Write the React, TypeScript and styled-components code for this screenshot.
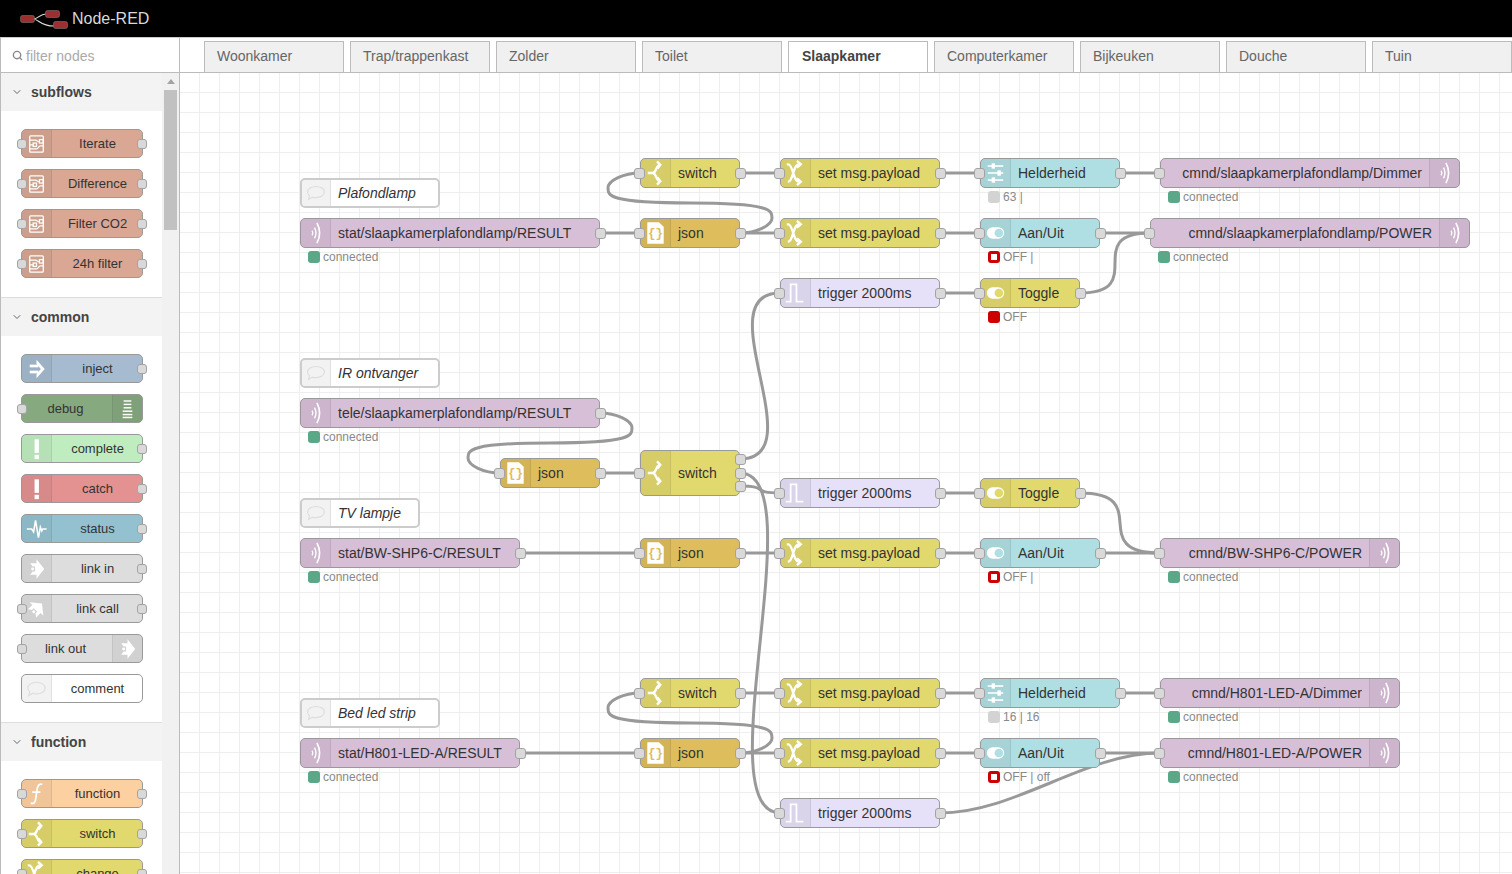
import React from 'react'
import styled, { createGlobalStyle } from 'styled-components'
import { ChevronDown, Search } from 'lucide-react'

const GlobalStyle = createGlobalStyle`
  html, body {
    margin: 0;
    padding: 0;
    height: 100%;
    overflow: hidden;
    background: #fff;
    font-family: "Liberation Sans", Arial, sans-serif;
    color: #333;
  }
`

const Page = styled.div`
  width: 1512px;
  height: 874px;
  display: flex;
  flex-direction: column;
  overflow: hidden;
`

const Header = styled.header`
  flex: none;
  height: 37px;
  background: #000;
  border-bottom: 1px solid #ccc;
  display: flex;
  align-items: center;
  gap: 4px;
  padding-left: 20px;
  color: #d8d8d8;
  font-size: 16px;
`

const Body = styled.div`
  flex: 1;
  min-height: 0;
  display: flex;
`

const Sidebar = styled.aside`
  flex: none;
  width: 178px;
  border-left: 1px solid #bbb;
  border-right: 1px solid #bbb;
  display: flex;
  flex-direction: column;
  overflow: hidden;
`

const Filter = styled.div`
  flex: none;
  height: 35px;
  box-sizing: border-box;
  border-bottom: 1px solid #bbb;
  display: flex;
  align-items: center;
  gap: 3px;
  padding: 1px 0 0 11px;
  color: #aaa;
  font-size: 14px;

  svg {
    color: #888;
  }
`

const PaletteScroll = styled.div`
  flex: 1;
  min-height: 0;
  display: flex;
`

const PaletteList = styled.div`
  width: 161px;
  flex: none;
`

const Scrollbar = styled.div`
  flex: 1;
  background: #f1f1f1;
  position: relative;
  display: flex;
  flex-direction: column;
  align-items: center;
  padding-top: 6px;
  gap: 6px;
`

const ScrollArrow = styled.div`
  width: 0;
  height: 0;
  border-left: 4px solid transparent;
  border-right: 4px solid transparent;
  border-bottom: 5px solid #a3a3a3;
`

const ScrollThumb = styled.div`
  width: 13px;
  height: 140px;
  background: #c1c1c1;
`

const Category = styled.section`
  border-bottom: 1px solid #ddd;
`

const CategoryHeader = styled.div`
  height: 38px;
  background: #f3f3f3;
  display: flex;
  align-items: center;
  gap: 8px;
  padding-left: 10px;
  font-size: 14px;
  font-weight: 700;
  color: #444;

  svg {
    color: #666;
  }
`

const CategoryBody = styled.div`
  display: flex;
  flex-direction: column;
  gap: 11px;
  padding: 18px 0 19px 20px;
`

const PaletteNode = styled.div<{ $color: string }>`
  position: relative;
  width: 122px;
  height: 29px;
  box-sizing: border-box;
  flex: none;
  display: flex;
  align-items: stretch;
  background: ${p => p.$color};
  border: 1px solid #999;
  border-radius: 5px;
  font-size: 13px;
  color: #333;
`

const PaletteLabel = styled.div<{ $shift?: boolean }>`
  flex: 1;
  display: flex;
  align-items: center;
  justify-content: center;
  padding-right: ${p => (p.$shift ? 3 : 0)}px;
  padding-left: ${p => (p.$shift ? 0 : 1)}px;
`

const IconBox = styled.div<{ $right?: boolean; $width?: number }>`
  flex: none;
  width: ${p => p.$width ?? 30}px;
  display: flex;
  align-items: center;
  justify-content: center;
  background: rgba(0, 0, 0, 0.05);
  ${p => (p.$right ? 'border-left' : 'border-right')}: 1px solid rgba(0, 0, 0, 0.07);
  box-sizing: border-box;
  border-radius: ${p => (p.$right ? '0 4px 4px 0' : '4px 0 0 4px')};
`

const Port = styled.span<{ $side: 'left' | 'right'; $top?: number }>`
  position: absolute;
  ${p => p.$side}: -7px;
  top: ${p => (p.$top !== undefined ? `${p.$top}px` : '50%')};
  margin-top: -5.5px;
  width: 11px;
  height: 11px;
  box-sizing: border-box;
  background: #d9d9d9;
  border: 1px solid #a3a3a3;
  border-radius: 3px;
`

const PalettePort = styled(Port)`
  ${p => p.$side}: -5px;
  width: 10px;
  height: 10px;
  margin-top: -5px;
`

const Main = styled.main`
  flex: 1;
  min-width: 0;
  display: flex;
  flex-direction: column;
`

const TabBar = styled.nav`
  flex: none;
  height: 34px;
  border-bottom: 1px solid #bbb;
  display: flex;
  align-items: flex-end;
  gap: 6px;
  padding-left: 24px;
  overflow: hidden;
`

const Tab = styled.div<{ $active?: boolean }>`
  flex: none;
  width: 140px;
  height: ${p => (p.$active ? '32px' : '31px')};
  box-sizing: border-box;
  margin-bottom: ${p => (p.$active ? '-1px' : '0')};
  padding: 0 0 ${p => (p.$active ? '4px' : '3px')} ${p => (p.$active ? '13px' : '12px')};
  display: flex;
  align-items: center;
  border: 1px solid #bbb;
  border-bottom: 0;
  background: ${p => (p.$active ? '#fff' : '#f0f0f0')};
  color: ${p => (p.$active ? '#444' : '#666')};
  font-size: 14px;
  font-weight: ${p => (p.$active ? 700 : 400)};
`

const Canvas = styled.div`
  flex: 1;
  position: relative;
  overflow: hidden;
  background-color: #fff;
  background-image: linear-gradient(#eee 1px, transparent 1px), linear-gradient(90deg, #eee 1px, transparent 1px);
  background-size: 20px 20px;
  background-position: 0 19px, 19px 0;
`

const Wires = styled.svg`
  position: absolute;
  left: 0;
  top: 0;
`

const Wire = styled.path`
  fill: none;
  stroke: #999;
  stroke-width: 3;
`

const FlowNode = styled.div<{ $x: number; $y: number; $w: number; $h: number; $color: string; $comment: boolean }>`
  position: absolute;
  left: ${p => p.$x - 180}px;
  top: ${p => p.$y - 73}px;
  width: ${p => p.$w}px;
  height: ${p => p.$h}px;
  box-sizing: border-box;
  display: flex;
  align-items: stretch;
  background: ${p => p.$color};
  border: ${p => (p.$comment ? '2px solid #ccc' : '1px solid #999')};
  border-radius: 5px;
  font-size: 14px;
  color: #333;
`

const FlowLabel = styled.div<{ $italic?: boolean; $right?: boolean }>`
  flex: 1;
  min-width: 0;
  display: flex;
  align-items: center;
  white-space: nowrap;
  justify-content: ${p => (p.$right ? 'flex-end' : 'flex-start')};
  padding: ${p => (p.$right ? '0 7px 0 0' : '0 0 0 7px')};
  font-style: ${p => (p.$italic ? 'italic' : 'normal')};
`

const Status = styled.div`
  position: absolute;
  left: 7px;
  top: 100%;
  margin-top: 3px;
  display: flex;
  align-items: center;
  gap: 3px;
  font-size: 12px;
  line-height: 14px;
  color: #888;
  white-space: nowrap;
`

const Dot = styled.span<{ $tone: 'green' | 'grey' | 'red' | 'ring' }>`
  width: 12px;
  height: 12px;
  box-sizing: border-box;
  border-radius: 3px;
  background: ${p => ({ green: '#5aa888', grey: '#d3d3d3', red: '#c00', ring: '#fff' }[p.$tone])};
  border: ${p => (p.$tone === 'ring' ? '3px solid #c00' : 'none')};
`

type IconKind =
  | 'subflow' | 'inject' | 'debug' | 'alert' | 'status' | 'linkin' | 'linkcall' | 'comment'
  | 'function' | 'switch' | 'change' | 'json' | 'mqtt' | 'trigger' | 'slider' | 'toggle'

function NodeIcon({ kind, tint }: { kind: IconKind; tint?: string }) {
  const line = { fill: 'none', stroke: '#fff', strokeWidth: 2 }
  return (
    <svg width="30" height="30" viewBox="0 0 30 30">
      {kind === 'subflow' && (
        <g {...line} strokeWidth={1.3}>
          <rect x="8" y="6.500" width="14" height="17" rx="1" />
          <path d="M8 11h6c2 0 2 2 4 2M8 20h7c2 0 2-3 4-3h3M12 16H8" />
          <rect x="18" y="10.500" width="4" height="3.500" />
          <rect x="11.500" y="14" width="3.500" height="3.500" />
        </g>
      )}
      {kind === 'inject' && (
        <g fill="#fff">
          <rect x="8" y="10.500" width="9" height="2.800" />
          <rect x="8" y="16.700" width="9" height="2.800" />
          <path d="M15 5.500 23.500 15 15 24.500v-4.200l4.500-5.300-4.500-5.300z" />
        </g>
      )}
      {kind === 'debug' && (
        <g fill="#fff">
          <rect x="11" y="6" width="8" height="1.500" />
          <rect x="11" y="9.500" width="8" height="1.500" />
          <rect x="11" y="13" width="8" height="1.500" />
          <rect x="10" y="16.500" width="10" height="1.500" />
          <rect x="10" y="20" width="10" height="1.500" />
          <rect x="10" y="23" width="10" height="1.500" />
        </g>
      )}
      {kind === 'alert' && (
        <g fill="#fff">
          <rect x="13" y="5" width="4.500" height="14" />
          <rect x="13" y="21" width="4.500" height="4.500" />
        </g>
      )}
      {kind === 'status' && <path {...line} strokeWidth={1.6} d="M5 15h5l2 3 2-12 3 18 2-11 1.500 4 1-2h4" />}
      {(kind === 'linkin' || kind === 'linkcall') && (
        <g fill="#fff" transform={kind === 'linkcall' ? 'rotate(-45 15 15)' : undefined}>
          <path d="M8.500 9H15V5l8 10-8 10v-4H8.500l2.500-3.500h2.500V12.500H11z" />
          <circle cx="11" cy="15" r="1.500" />
        </g>
      )}
      {kind === 'comment' && (
        <path
          fill="none"
          stroke="#ddd"
          strokeWidth={1.2}
          d="M6 14c0-3.500 4-6 9-6s9 2.500 9 6-4 6-9 6c-1.500 0-2.800-.2-4-.6L7 22l1-4c-1.300-1-2-2.400-2-4z"
        />
      )}
      {kind === 'function' && <path {...line} strokeWidth={1.8} d="M21 5c-4-1-5 2-5.500 6l-1.500 10c-.5 3-2 4.500-5 3.500M10.500 13H19" />}
      {kind === 'switch' && (
        <g {...line} strokeWidth={2.4}>
          <path d="M7 15h5c4 0 3-7 7-8.500M12 15c4 0 3 7 7 8.500" />
          <path d="M16.500 3 20 6.500 17 10.500M17 19.500l3 4-3.500 3.500" />
        </g>
      )}
      {kind === 'change' && (
        <g {...line} strokeWidth={2.4}>
          <path d="M6 6h1.500c5 0 5 18 11 18M7 24h.5c5 0 5-18 11-18" />
          <path d="m16.500 2.500 4 3.500-4 3.500M16.500 20.500l4 3.500-4 3.500" />
        </g>
      )}
      {kind === 'json' && (
        <g>
          <path fill="#fff" d="M6.500 4h12l5 4.500V26h-17z" />
          <text x="15" y="19" textAnchor="middle" fontSize="13" fontWeight="700" fill={tint} fontFamily="Liberation Mono, monospace">
            {'{}'}
          </text>
        </g>
      )}
      {kind === 'mqtt' && (
        <g {...line} strokeWidth={1.4}>
          <path d="M11.500 12.500q1.500 2.500 0 5" />
          <path d="M14 9.500q3 5.500 0 11" />
          <path d="M16.500 4.500q5.500 10.500 0 21" strokeWidth={1.7} />
        </g>
      )}
      {kind === 'trigger' && <path {...line} strokeWidth={1.8} d="M5 24h5V6h6v18h7" />}
      {kind === 'slider' && (
        <g fill="#fff">
          <rect x="7" y="7" width="16" height="1.600" />
          <rect x="7" y="14.200" width="16" height="1.600" />
          <rect x="7" y="21.500" width="16" height="1.600" />
          <rect x="11" y="5" width="3.500" height="5.500" />
          <rect x="17" y="12.300" width="3.500" height="5.500" />
          <rect x="11" y="19.500" width="3.500" height="5.500" />
        </g>
      )}
      {kind === 'toggle' && (
        <g>
          <rect x="6" y="9" width="18" height="12" rx="6" fill="#fff" />
          <circle cx="18.500" cy="15" r="4.500" fill={tint} />
        </g>
      )}
    </svg>
  )
}

type PaletteItem = { label: string; color: string; icon: IconKind; input?: boolean; output?: boolean; right?: boolean }

const palette: { title: string; items: PaletteItem[] }[] = [
  {
    title: 'subflows',
    items: ['Iterate', 'Difference', 'Filter CO2', '24h filter'].map(label => ({
      label,
      color: '#d9a793',
      icon: 'subflow' as IconKind,
      input: true,
      output: true,
    })),
  },
  {
    title: 'common',
    items: [
      { label: 'inject', color: '#a6bbcf', icon: 'inject', output: true },
      { label: 'debug', color: '#87a980', icon: 'debug', input: true, right: true },
      { label: 'complete', color: '#c0edc0', icon: 'alert', output: true },
      { label: 'catch', color: '#e49191', icon: 'alert', output: true },
      { label: 'status', color: '#94c1d0', icon: 'status', output: true },
      { label: 'link in', color: '#ddd', icon: 'linkin', output: true },
      { label: 'link call', color: '#ddd', icon: 'linkcall', input: true, output: true },
      { label: 'link out', color: '#ddd', icon: 'linkin', input: true, right: true },
      { label: 'comment', color: '#fff', icon: 'comment' },
    ],
  },
  {
    title: 'function',
    items: [
      { label: 'function', color: '#fdd0a2', icon: 'function', input: true, output: true },
      { label: 'switch', color: '#e2d96e', icon: 'switch', input: true, output: true },
      { label: 'change', color: '#e2d96e', icon: 'change', input: true, output: true },
    ],
  },
]

const tabs = ['Woonkamer', 'Trap/trappenkast', 'Zolder', 'Toilet', 'Slaapkamer', 'Computerkamer', 'Bijkeuken', 'Douche', 'Tuin']

const kinds: Record<string, { color: string; icon: IconKind }> = {
  comment: { color: '#fff', icon: 'comment' },
  mqttIn: { color: '#d8bfd8', icon: 'mqtt' },
  mqttOut: { color: '#d8bfd8', icon: 'mqtt' },
  json: { color: '#debd5c', icon: 'json' },
  switch: { color: '#e2d96e', icon: 'switch' },
  change: { color: '#e2d96e', icon: 'change' },
  trigger: { color: '#e6e0f8', icon: 'trigger' },
  slider: { color: '#b0dfe3', icon: 'slider' },
  dashToggle: { color: '#b0dfe3', icon: 'toggle' },
  toggle: { color: '#e2d96e', icon: 'toggle' },
}

type Tone = 'green' | 'grey' | 'red' | 'ring'
// x, y are page coordinates of the node's top left corner
type Flow = { kind: string; x: number; y: number; w: number; label: string; h?: number; status?: [Tone, string]; outs?: number[] }

const CONNECTED: [Tone, string] = ['green', 'connected']

const nodes: Flow[] = [
  { kind: 'comment', x: 300, y: 178, w: 140, label: 'Plafondlamp' },
  { kind: 'mqttIn', x: 300, y: 218, w: 300, label: 'stat/slaapkamerplafondlamp/RESULT', status: CONNECTED },
  { kind: 'switch', x: 640, y: 158, w: 100, label: 'switch' },
  { kind: 'json', x: 640, y: 218, w: 100, label: 'json' },
  { kind: 'change', x: 780, y: 158, w: 160, label: 'set msg.payload' },
  { kind: 'change', x: 780, y: 218, w: 160, label: 'set msg.payload' },
  { kind: 'slider', x: 980, y: 158, w: 140, label: 'Helderheid', status: ['grey', '63 |'] },
  { kind: 'dashToggle', x: 980, y: 218, w: 120, label: 'Aan/Uit', status: ['ring', 'OFF |'] },
  { kind: 'mqttOut', x: 1160, y: 158, w: 300, label: 'cmnd/slaapkamerplafondlamp/Dimmer', status: CONNECTED },
  { kind: 'mqttOut', x: 1150, y: 218, w: 320, label: 'cmnd/slaapkamerplafondlamp/POWER', status: CONNECTED },
  { kind: 'trigger', x: 780, y: 278, w: 160, label: 'trigger 2000ms' },
  { kind: 'toggle', x: 980, y: 278, w: 100, label: 'Toggle', status: ['red', 'OFF'] },

  { kind: 'comment', x: 300, y: 358, w: 140, label: 'IR ontvanger' },
  { kind: 'mqttIn', x: 300, y: 398, w: 300, label: 'tele/slaapkamerplafondlamp/RESULT', status: CONNECTED },
  { kind: 'json', x: 500, y: 458, w: 100, label: 'json' },
  { kind: 'switch', x: 640, y: 450, w: 100, h: 46, label: 'switch', outs: [9, 23, 36] },
  { kind: 'trigger', x: 780, y: 478, w: 160, label: 'trigger 2000ms' },
  { kind: 'toggle', x: 980, y: 478, w: 100, label: 'Toggle' },

  { kind: 'comment', x: 300, y: 498, w: 120, label: 'TV lampje' },
  { kind: 'mqttIn', x: 300, y: 538, w: 220, label: 'stat/BW-SHP6-C/RESULT', status: CONNECTED },
  { kind: 'json', x: 640, y: 538, w: 100, label: 'json' },
  { kind: 'change', x: 780, y: 538, w: 160, label: 'set msg.payload' },
  { kind: 'dashToggle', x: 980, y: 538, w: 120, label: 'Aan/Uit', status: ['ring', 'OFF |'] },
  { kind: 'mqttOut', x: 1160, y: 538, w: 240, label: 'cmnd/BW-SHP6-C/POWER', status: CONNECTED },

  { kind: 'switch', x: 640, y: 678, w: 100, label: 'switch' },
  { kind: 'change', x: 780, y: 678, w: 160, label: 'set msg.payload' },
  { kind: 'slider', x: 980, y: 678, w: 140, label: 'Helderheid', status: ['grey', '16 | 16'] },
  { kind: 'mqttOut', x: 1160, y: 678, w: 240, label: 'cmnd/H801-LED-A/Dimmer', status: CONNECTED },
  { kind: 'comment', x: 300, y: 698, w: 140, label: 'Bed led strip' },
  { kind: 'mqttIn', x: 300, y: 738, w: 220, label: 'stat/H801-LED-A/RESULT', status: CONNECTED },
  { kind: 'json', x: 640, y: 738, w: 100, label: 'json' },
  { kind: 'change', x: 780, y: 738, w: 160, label: 'set msg.payload' },
  { kind: 'dashToggle', x: 980, y: 738, w: 120, label: 'Aan/Uit', status: ['ring', 'OFF | off'] },
  { kind: 'mqttOut', x: 1160, y: 738, w: 240, label: 'cmnd/H801-LED-A/POWER', status: CONNECTED },
  { kind: 'trigger', x: 780, y: 798, w: 160, label: 'trigger 2000ms' },
]

// [from x, from y, to x, to y], page coordinates of the port centres
const links: number[][] = [
  [600, 233, 640, 233], [740, 233, 640, 173], [740, 233, 780, 233], [740, 173, 780, 173],
  [940, 173, 980, 173], [1120, 173, 1160, 173], [940, 233, 980, 233], [1100, 233, 1150, 233],
  [940, 293, 980, 293], [1080, 293, 1150, 233],
  [600, 413, 500, 473], [600, 473, 640, 473], [740, 459, 780, 293], [740, 473, 780, 813], [740, 486, 780, 493],
  [940, 493, 980, 493], [1080, 493, 1160, 553],
  [520, 553, 640, 553], [740, 553, 780, 553], [940, 553, 980, 553], [1100, 553, 1160, 553],
  [740, 693, 780, 693], [940, 693, 980, 693], [1120, 693, 1160, 693],
  [520, 753, 640, 753], [740, 753, 640, 693], [740, 753, 780, 753], [940, 753, 980, 753], [1100, 753, 1160, 753],
  [940, 813, 1160, 753],
]

// same curve the editor draws between two ports
function wirePath([x1, y1, x2, y2]: number[]) {
  const nodeWidth = 100
  const cpHeight = 15
  const dx = x2 - x1
  const dy = y2 - y1
  if (dx > 0) {
    const delta = Math.sqrt(dx * dx + dy * dy)
    const scale = delta < nodeWidth ? 0.75 - 0.75 * ((nodeWidth - delta) / nodeWidth) : 0.75
    const c = scale * nodeWidth
    return `M${x1} ${y1}C${x1 + c} ${y1} ${x2 - c} ${y2} ${x2} ${y2}`
  }
  // backward wire: loops out past both ports
  const scale = 0.4 - 0.2 * Math.max(0, (nodeWidth - Math.min(Math.abs(dx), Math.abs(dy))) / nodeWidth)
  const midX = Math.floor(x2 - dx / 2)
  const midY = Math.floor(y2 - dy / 2)
  const y0 = (y2 + midY) / 2
  const topX = x1 + nodeWidth * scale
  const topY = dy > 0 ? Math.min(y0 - dy / 2, y1 + cpHeight) : Math.max(y0 - dy / 2, y1 - cpHeight)
  const bottomX = x2 - nodeWidth * scale
  const bottomY = dy > 0 ? Math.max(y0, y2 - cpHeight) : Math.min(y0, y2 + cpHeight)
  const cx = (x1 + topX) / 2
  const scy = dy > 0 ? 1 : -1
  const cp = [
    [cx, y1],
    [topX, dy > 0 ? Math.max(y1, topY - cpHeight) : Math.min(y1, topY + cpHeight)],
    [cx, dy > 0 ? Math.min(midY, topY + cpHeight) : Math.max(midY, topY - cpHeight)],
    [bottomX, dy > 0 ? Math.max(midY, bottomY - cpHeight) : Math.min(midY, bottomY + cpHeight)],
    [(x2 + bottomX) / 2, y2],
  ]
  if (cp[2][1] === topY + scy * cpHeight) {
    if (Math.abs(dy) < cpHeight * 10) {
      cp[1][1] = topY - (scy * cpHeight) / 2
      cp[3][1] = bottomY - (scy * cpHeight) / 2
    }
    cp[2][0] = topX
  }
  return (
    `M${x1} ${y1}C${cp[0][0]} ${cp[0][1]} ${cp[1][0]} ${cp[1][1]} ${topX} ${topY}` +
    `S${cp[2][0]} ${cp[2][1]} ${midX} ${midY}` +
    `S${cp[3][0]} ${cp[3][1]} ${bottomX} ${bottomY}` +
    `S${cp[4][0]} ${cp[4][1]} ${x2} ${y2}`
  )
}

function Logo() {
  return (
    <svg width="48" height="20" viewBox="0 0 48 20">
      <path d="M13 10c6 0 6-5 13-5M13 10c6 0 7 7 21 7" fill="none" stroke="#ddd" strokeWidth="1.200" />
      <rect x="0.500" y="6.500" width="14" height="7" rx="2" fill="#9c2f2f" stroke="#777" strokeWidth="0.600" />
      <rect x="25.500" y="1.500" width="14" height="7" rx="2" fill="#9c2f2f" stroke="#777" strokeWidth="0.600" />
      <rect x="33.500" y="12.500" width="14" height="7" rx="2" fill="#9c2f2f" stroke="#777" strokeWidth="0.600" />
    </svg>
  )
}

function CanvasNode({ node }: { node: Flow }) {
  const kind = kinds[node.kind]
  const h = node.h ?? 30
  const isComment = node.kind === 'comment'
  const hasInput = !isComment && node.kind !== 'mqttIn'
  const isOut = node.kind === 'mqttOut'
  const hasOutput = !isComment && !isOut
  const icon = (
    <IconBox $right={isOut} $width={isComment ? 29 : 30}>
      <NodeIcon kind={kind.icon} tint={kind.color} />
    </IconBox>
  )
  return (
    <FlowNode $x={node.x} $y={node.y} $w={node.w} $h={h} $color={kind.color} $comment={isComment}>
      {!isOut && icon}
      <FlowLabel $italic={isComment} $right={isOut}>
        {node.label}
      </FlowLabel>
      {isOut && icon}
      {hasInput && <Port $side="left" />}
      {hasOutput && !node.outs && <Port $side="right" />}
      {node.outs?.map(top => <Port key={top} $side="right" $top={top - 1} />)}
      {node.status && (
        <Status>
          <Dot $tone={node.status[0]} />
          {node.status[1]}
        </Status>
      )}
    </FlowNode>
  )
}

export default function App() {
  return (
    <Page>
      <GlobalStyle />
      <Header>
        <Logo />
        Node-RED
      </Header>
      <Body>
        <Sidebar>
          <Filter>
            <Search size={11} strokeWidth={3} />
            filter nodes
          </Filter>
          <PaletteScroll>
            <PaletteList>
              {palette.map(category => (
                <Category key={category.title}>
                  <CategoryHeader>
                    <ChevronDown size={12} />
                    {category.title}
                  </CategoryHeader>
                  <CategoryBody>
                    {category.items.map(item => (
                      <PaletteNode key={item.label} $color={item.color}>
                        {!item.right && (
                          <IconBox>
                            <NodeIcon kind={item.icon} />
                          </IconBox>
                        )}
                        <PaletteLabel $shift={item.right}>{item.label}</PaletteLabel>
                        {item.right && (
                          <IconBox $right>
                            <NodeIcon kind={item.icon} />
                          </IconBox>
                        )}
                        {item.input && <PalettePort $side="left" />}
                        {item.output && <PalettePort $side="right" />}
                      </PaletteNode>
                    ))}
                  </CategoryBody>
                </Category>
              ))}
            </PaletteList>
            <Scrollbar>
              <ScrollArrow />
              <ScrollThumb />
            </Scrollbar>
          </PaletteScroll>
        </Sidebar>
        <Main>
          <TabBar>
            {tabs.map(tab => (
              <Tab key={tab} $active={tab === 'Slaapkamer'}>
                {tab}
              </Tab>
            ))}
          </TabBar>
          <Canvas>
            <Wires width="1332" height="801" viewBox="180 73 1332 801">
              {links.map(link => (
                <Wire key={link.join()} d={wirePath(link)} />
              ))}
            </Wires>
            {nodes.map(node => (
              <CanvasNode key={`${node.x}-${node.y}`} node={node} />
            ))}
          </Canvas>
        </Main>
      </Body>
    </Page>
  )
}
